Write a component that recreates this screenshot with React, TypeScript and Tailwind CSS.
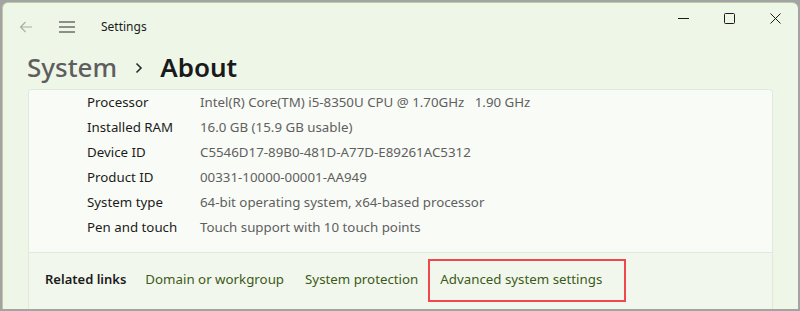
const specs = [
  { label: "Processor", value: "Intel(R) Core(TM) i5-8350U CPU @ 1.70GHz\u00a0\u00a0\u00a01.90 GHz" },
  { label: "Installed RAM", value: "16.0 GB (15.9 GB usable)" },
  { label: "Device ID", value: "C5546D17-89B0-481D-A77D-E89261AC5312" },
  { label: "Product ID", value: "00331-10000-00001-AA949" },
  { label: "System type", value: "64-bit operating system, x64-based processor" },
  { label: "Pen and touch", value: "Touch support with 10 touch points" },
];

const App = () => {
  return (
    <div className="w-[800px] h-[311px] bg-[#a3a3a3] p-[2px]" style={{ fontFamily: '"Segoe UI", "Noto Sans", sans-serif' }}>
      <div className="relative w-full h-full rounded-tl-[6px] rounded-tr-[6px] bg-[#eef6e8] border-t border-l border-[#6b8f3a]/40 flex flex-col overflow-hidden">
        {/* Title bar */}
        <div className="h-[44px] flex items-start">
          <div className="flex items-center h-[48px]">
            <svg className="ml-[16px]" width="14" height="12" viewBox="0 0 14 12" fill="none" stroke="#a8aca6" strokeWidth="1.1">
              <path d="M13 6H1.5M6.5 1L1.5 6l5 5" />
            </svg>
            <svg className="ml-[26px]" width="16" height="12" viewBox="0 0 16 12" fill="none" stroke="#2b2b2b" strokeWidth="1.1">
              <path d="M0 1h16M0 6h16M0 11h16" />
            </svg>
            <span className="ml-[26px] text-[12px] text-[#1b1b1b]">Settings</span>
          </div>
          <div className="ml-auto flex items-center h-[31px] text-[#1b1b1b]">
            <div className="w-[46px] h-[31px] flex items-center justify-center">
              <svg width="11" height="11" viewBox="0 0 11 11" stroke="#1b1b1b" strokeWidth="1">
                <path d="M0 5.5h11" />
              </svg>
            </div>
            <div className="w-[46px] h-[31px] flex items-center justify-center">
              <svg width="11" height="11" viewBox="0 0 11 11" fill="none" stroke="#1b1b1b" strokeWidth="1">
                <rect x="0.5" y="0.5" width="10" height="10" rx="1" />
              </svg>
            </div>
            <div className="w-[46px] h-[31px] flex items-center justify-center">
              <svg width="11" height="11" viewBox="0 0 11 11" stroke="#1b1b1b" strokeWidth="1">
                <path d="M0.5 0.5l10 10M10.5 0.5l-10 10" />
              </svg>
            </div>
          </div>
        </div>

        {/* Header */}
        <div className="flex items-center pl-[24px] h-[40px]">
          <span className="text-[26px] leading-none text-[#5e5e5e] font-medium">System</span>
          <svg className="ml-[18px] mt-[2px]" width="8" height="12" viewBox="0 0 8 12" fill="none" stroke="#2b2b2b" strokeWidth="1.6">
            <path d="M1.5 1.5L6 6l-4.5 4.5" />
          </svg>
          <span className="ml-[17px] text-[26px] leading-none text-[#1a1a1a] font-semibold">About</span>
        </div>

        {/* Card */}
        <div className="mt-[2px] ml-[25px] mr-[25px] flex-1 flex flex-col border border-[#e2e8dc] border-b-0 rounded-t-[4px] overflow-hidden">
          <div className="bg-[#f9fbf6] pt-[0px] pb-[12px] pl-[58px]">
            {specs.map((s) => (
              <div key={s.label} className="flex items-center h-[25px] text-[13.3px]">
                <span className="w-[113px] text-[#1b1b1b]">{s.label}</span>
                <span className="text-[#5f5f5f]">{s.value}</span>
              </div>
            ))}
          </div>
          <div className="flex-1 bg-[#f2f7ed] border-t border-[#e2e8dc] flex items-center pl-[16px] pb-[2px] text-[13.3px]">
            <span className="font-semibold text-[13px] text-[#1b1b1b]">Related links</span>
            <span className="ml-[19px] text-[#3c5a17]">Domain or workgroup</span>
            <span className="ml-[21px] text-[#3c5a17]">System protection</span>
            <div className="ml-[10px] h-[43px] w-[198px] border-2 border-[#f0474c] flex items-center pl-[10px] text-[#3c5a17]">
              Advanced system settings
            </div>
          </div>
        </div>
      </div>
    </div>
  );
};

export default App;
